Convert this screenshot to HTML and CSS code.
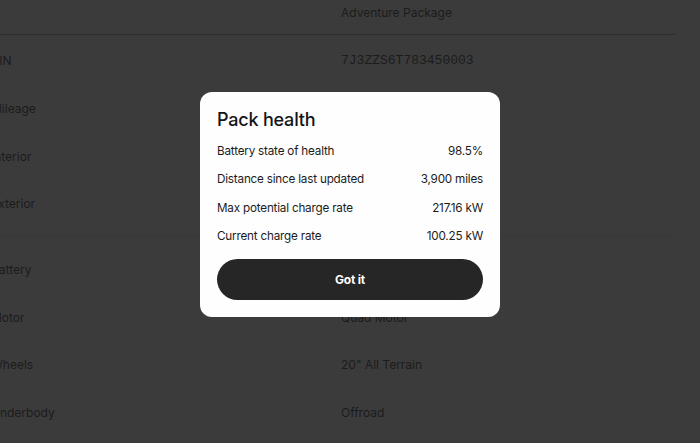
FILE: index.html
```html
<!DOCTYPE html>
<html>
<head>
<meta charset="utf-8">
<link rel="stylesheet" href="styles.css">
</head>
<body>
<div class="sheet">
  <div class="row"><span class="label"></span><span class="value">Adventure Package</span></div>
  <div class="divider"></div>
  <div class="row"><span class="label">VIN</span><span class="value mono">7J3ZZS6T783450003</span></div>
  <div class="row"><span class="label">Mileage</span><span class="value"></span></div>
  <div class="row"><span class="label">Interior</span><span class="value"></span></div>
  <div class="row"><span class="label">Exterior</span><span class="value"></span></div>
  <div class="divider faint"></div>
  <div class="row"><span class="label">Battery</span><span class="value"></span></div>
  <div class="row"><span class="label">Motor</span><span class="value">Quad Motor</span></div>
  <div class="row"><span class="label">Wheels</span><span class="value">20" All Terrain</span></div>
  <div class="row"><span class="label">Underbody</span><span class="value">Offroad</span></div>
</div>

<div class="modal">
  <h2 class="title">Pack health</h2>
  <div class="stats">
    <div class="stat"><span>Battery state of health</span><span>98.5%</span></div>
    <div class="stat"><span>Distance since last updated</span><span>3,900 miles</span></div>
    <div class="stat"><span>Max potential charge rate</span><span>217.16 kW</span></div>
    <div class="stat"><span>Current charge rate</span><span>100.25 kW</span></div>
  </div>
  <button class="btn">Got it</button>
</div>
</body>
</html>
```
FILE: styles.css
```css
html, body {
  margin: 0;
  padding: 0;
  width: 700px;
  height: 443px;
  overflow: hidden;
  background: #3b3b3b;
  font-family: "Inter", "Noto Sans", sans-serif;
}

.sheet {
  display: flex;
  flex-direction: column;
  padding-top: 0;
  margin-left: -9px;
  width: 684px;
}

.row {
  display: flex;
  align-items: center;
  height: 47.67px;
  flex: none;
  font-size: 12px;
  color: #1b1b1b;
}

.row:first-child {
  height: 24px;
  margin-top: 0;
}

.label {
  width: 350px;
  flex: none;
}

.value.mono {
  font-family: "Liberation Mono", monospace;
  font-size: 13px;
}

.divider {
  flex: none;
  height: 1px;
  background: #2e2e2e;
  margin: 10px 0 0 0;
}

.divider + .row {
  margin-top: 2px;
}

.divider.faint {
  background: #373737;
  margin: 8px 0 9px 0;
}

.divider.faint + .row {
  margin-top: 0;
}

.modal {
  position: absolute;
  left: 200px;
  top: 92px;
  width: 300px;
  height: 225px;
  box-sizing: border-box;
  padding: 16px 17px 0 17px;
  background: #fefefe;
  border-radius: 12px;
  display: flex;
  flex-direction: column;
}

.title {
  margin: 0;
  font-size: 18px;
  font-weight: 500;
  color: #141414;
  line-height: 24px;
  letter-spacing: -0.2px;
}

.stats {
  display: flex;
  flex-direction: column;
  margin-top: 5px;
}

.stat {
  display: flex;
  justify-content: space-between;
  align-items: center;
  height: 28.3px;
  font-size: 11.7px;
  color: #1c1c1c;
  letter-spacing: -0.2px;
}

.btn {
  margin-top: 9px;
  height: 41px;
  border: none;
  border-radius: 21px;
  background: #262626;
  color: #fff;
  font-family: inherit;
  font-size: 12px;
  font-weight: 700;
  letter-spacing: -0.2px;
}
```
